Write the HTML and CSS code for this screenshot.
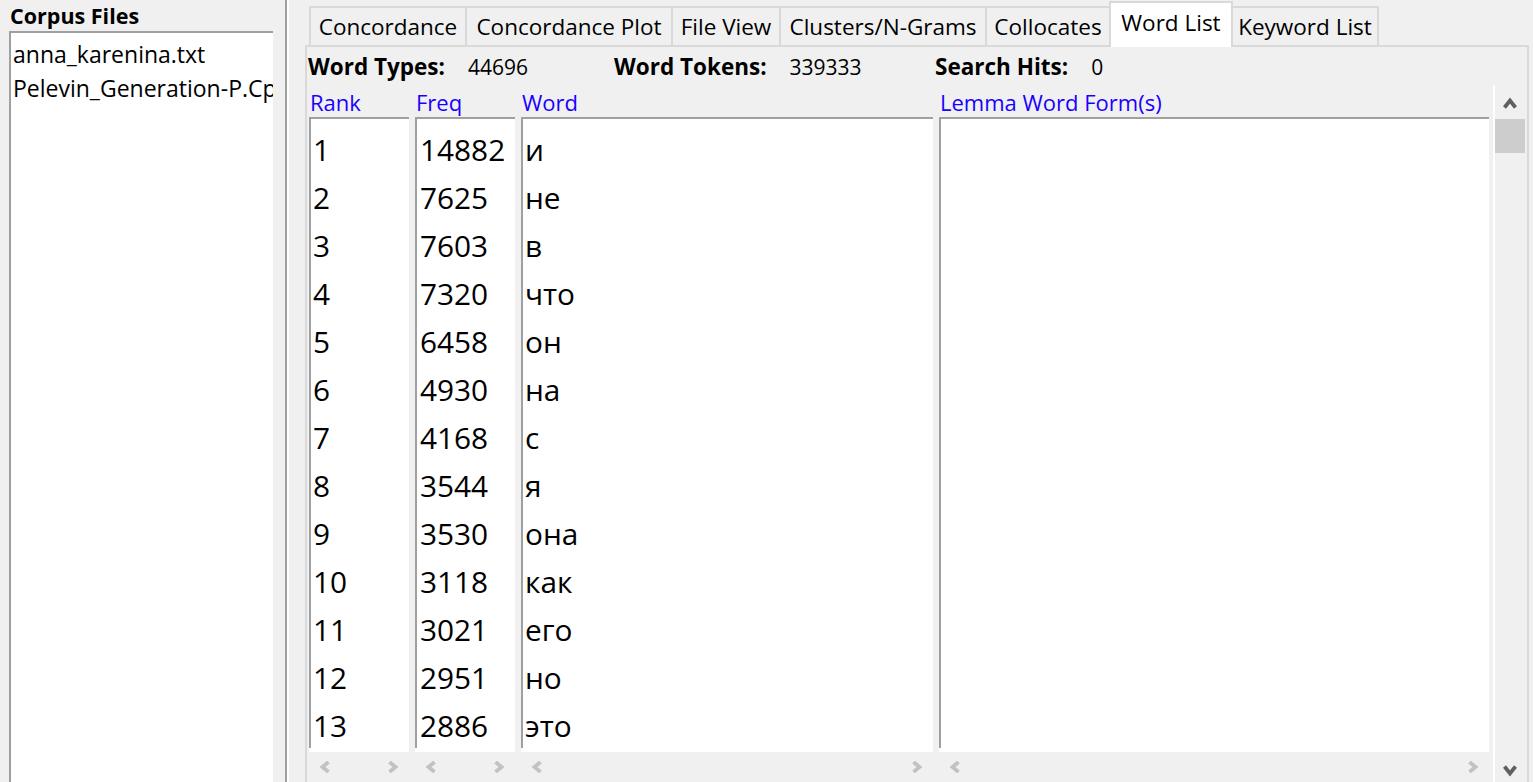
FILE: index.html
```html
<!DOCTYPE html>
<html lang="en">
<head>
<meta charset="utf-8">
<title>AntConc - Word List</title>
<link rel="stylesheet" href="styles.css">
</head>
<body>
<div class="app">
  <aside class="left">
    <div class="left-title">Corpus Files</div>
    <div class="file-list">
      <div class="file">anna_karenina.txt</div>
      <div class="file">Pelevin_Generation-P.Cp1251.txt</div>
    </div>
  </aside>
  <div class="splitter"></div>
  <main class="right">
    <div class="tabs">
      <div class="tab t1">Concordance</div>
      <div class="tab t2">Concordance Plot</div>
      <div class="tab t3">File View</div>
      <div class="tab t4">Clusters/N-Grams</div>
      <div class="tab t5">Collocates</div>
      <div class="tab t6 selected">Word List</div>
      <div class="tab t7 last">Keyword List</div>
    </div>
    <div class="pane">
      <div class="stats">
        <div class="stat stat-1"><span class="stat-label">Word Types:</span><span class="stat-value">44696</span></div>
        <div class="stat stat-2"><span class="stat-label">Word Tokens:</span><span class="stat-value">339333</span></div>
        <div class="stat stat-3"><span class="stat-label">Search Hits:</span><span class="stat-value">0</span></div>
      </div>
      <div class="results">
        <div class="cols">
          <div class="col col-rank">
            <div class="col-head">Rank</div>
            <div class="box"><div class="box-inner">
              <div class="row">1</div><div class="row">2</div><div class="row">3</div><div class="row">4</div><div class="row">5</div><div class="row">6</div><div class="row">7</div><div class="row">8</div><div class="row">9</div><div class="row">10</div><div class="row">11</div><div class="row">12</div><div class="row">13</div>
            </div></div>
            <div class="hscroll">
              <svg class="chev" viewBox="0 0 12 12"><path d="M9.5 1 L3.5 6 L9.5 11"/></svg>
              <svg class="chev" viewBox="0 0 12 12"><path d="M2.5 1 L8.5 6 L2.5 11"/></svg>
            </div>
          </div>
          <div class="col col-freq">
            <div class="col-head">Freq</div>
            <div class="box"><div class="box-inner">
              <div class="row">14882</div><div class="row">7625</div><div class="row">7603</div><div class="row">7320</div><div class="row">6458</div><div class="row">4930</div><div class="row">4168</div><div class="row">3544</div><div class="row">3530</div><div class="row">3118</div><div class="row">3021</div><div class="row">2951</div><div class="row">2886</div>
            </div></div>
            <div class="hscroll">
              <svg class="chev" viewBox="0 0 12 12"><path d="M9.5 1 L3.5 6 L9.5 11"/></svg>
              <svg class="chev" viewBox="0 0 12 12"><path d="M2.5 1 L8.5 6 L2.5 11"/></svg>
            </div>
          </div>
          <div class="col col-word">
            <div class="col-head">Word</div>
            <div class="box"><div class="box-inner">
              <div class="row">и</div><div class="row">не</div><div class="row">в</div><div class="row">что</div><div class="row">он</div><div class="row">на</div><div class="row">с</div><div class="row">я</div><div class="row">она</div><div class="row">как</div><div class="row">его</div><div class="row">но</div><div class="row">это</div>
            </div></div>
            <div class="hscroll">
              <svg class="chev" viewBox="0 0 12 12"><path d="M9.5 1 L3.5 6 L9.5 11"/></svg>
              <svg class="chev" viewBox="0 0 12 12"><path d="M2.5 1 L8.5 6 L2.5 11"/></svg>
            </div>
          </div>
          <div class="col col-lemma">
            <div class="col-head">Lemma Word Form(s)</div>
            <div class="box"><div class="box-inner"></div></div>
            <div class="hscroll">
              <svg class="chev" viewBox="0 0 12 12"><path d="M9.5 1 L3.5 6 L9.5 11"/></svg>
              <svg class="chev" viewBox="0 0 12 12"><path d="M2.5 1 L8.5 6 L2.5 11"/></svg>
            </div>
          </div>
        </div>
        <div class="vscroll">
          <div class="vs-up"><svg class="vchev" viewBox="0 0 14 12"><path d="M1.5 10.5 L7 3.5 L12.5 10.5"/></svg></div>
          <div class="vs-thumb"></div>
          <div class="vs-track"></div>
          <div class="vs-down"><svg class="vchev" viewBox="0 0 14 12"><path d="M1.5 1.5 L7 8.5 L12.5 1.5"/></svg></div>
        </div>
      </div>
    </div>
  </main>
</div>
</body>
</html>
```
FILE: styles.css
```css
* { box-sizing: border-box; }

html, body {
  margin: 0;
  padding: 0;
}

body {
  width: 1533px;
  height: 782px;
  overflow: hidden;
  background: #f0f0f0;
  font-family: "Open Sans", "Noto Sans", sans-serif;
  color: #000;
}

.app {
  display: flex;
  height: 782px;
}

/* left panel */
.left {
  width: 285px;
  display: flex;
  flex-direction: column;
}

.left-title {
  height: 31px;
  padding: 1px 0 0 10px;
  line-height: 30px;
  font-size: 21.5px;
  font-weight: 700;
  white-space: nowrap;
}

.file-list {
  flex: 1;
  margin-left: 9px;
  width: 264px;
  background: #fff;
  border-top: 2px solid #a0a0a0;
  border-left: 2px solid #a0a0a0;
  padding: 4px 0 0 2px;
  overflow: hidden;
}

.file {
  height: 34px;
  line-height: 34px;
  font-size: 23px;
  white-space: nowrap;
}

.splitter {
  width: 4px;
  background: #a0a0a0;
  border-right: 2px solid #fff;
}

/* right panel */
.right {
  flex: 1;
  display: flex;
  flex-direction: column;
  padding: 0 4px 0 16px;
  min-width: 0;
}

.tabs {
  height: 45px;
  display: flex;
  align-items: flex-end;
  padding-left: 4px;
}

.tab {
  height: 39px;
  border-top: 2px solid #d9d9d9;
  border-left: 2px solid #d9d9d9;
  padding-top: 1px;
  line-height: 36px;
  font-size: 22.5px;
  text-align: center;
  white-space: nowrap;
}

.tab.selected {
  height: 46px;
  margin-bottom: -2px;
  background: #fff;
  border-right: 2px solid #d9d9d9;
  padding: 0 0 4px;
  line-height: 40px;
  position: relative;
  z-index: 1;
}

.tab.last {
  border-left: none;
  border-right: 2px solid #d9d9d9;
}

.t1 { width: 156px; }
.t2 { width: 206px; }
.t3 { width: 108px; }
.t4 { width: 206px; }
.t5 { width: 124px; }
.t6 { width: 124px; }
.t7 { width: 146px; }

.pane {
  flex: 1;
  display: flex;
  flex-direction: column;
  border: 2px solid #d9d9d9;
  border-bottom: none;
  min-height: 0;
}

.stats {
  height: 38px;
  display: flex;
  align-items: flex-start;
  padding: 8px 0 0 1px;
  white-space: nowrap;
}

.stat {
  display: flex;
  align-items: flex-start;
  gap: 23px;
  height: 24px;
  line-height: 24px;
}

.stat-1 { width: 306px; }
.stat-2 { width: 321px; }

.stat-label {
  font-size: 22.5px;
  font-weight: 700;
}

.stat-value {
  font-size: 21px;
}

.results {
  flex: 1;
  display: flex;
  min-height: 0;
}

.cols {
  flex: 1;
  display: flex;
  gap: 6px;
  padding-left: 2px;
}

.col {
  display: flex;
  flex-direction: column;
}

.col-rank { width: 100px; }
.col-freq { width: 100px; }
.col-word { width: 412px; }
.col-lemma { width: 550px; }

.col-head {
  height: 32px;
  padding: 5px 0 0 1px;
  line-height: 24px;
  font-size: 22px;
  color: #1a00ff;
  white-space: nowrap;
}

.box {
  flex: 1;
  display: flex;
  background: #fff;
  border-top: 2px solid #a0a0a0;
  padding-bottom: 4px;
  min-height: 0;
}

.box-inner {
  flex: 1;
  border-left: 2px solid #a0a0a0;
  padding: 7px 0 0 2px;
  overflow: hidden;
}

.row {
  height: 48px;
  line-height: 48px;
  font-size: 29.8px;
  white-space: nowrap;
}

.col-freq .row {
  padding-left: 1px;
}

.hscroll {
  height: 30px;
  display: flex;
  align-items: center;
  justify-content: space-between;
  padding: 0 10px;
}

.chev {
  width: 12px;
  height: 12px;
  fill: none;
  stroke: #c2c2c2;
  stroke-width: 3.8;
}

.vscroll {
  width: 34px;
  display: flex;
  flex-direction: column;
  border-left: 2px solid #fff;
}

.vs-up {
  width: 30px;
  height: 34px;
  display: flex;
  justify-content: center;
  align-items: flex-start;
  padding-top: 12px;
}

.vs-thumb {
  width: 30px;
  height: 34px;
  background: #cdcdcd;
}

.vs-track {
  flex: 1;
}

.vs-down {
  width: 30px;
  height: 30px;
  display: flex;
  justify-content: center;
  align-items: flex-start;
  padding-top: 13px;
}

.vchev {
  width: 14px;
  height: 12px;
  fill: none;
  stroke: #606060;
  stroke-width: 3.8;
}
```
